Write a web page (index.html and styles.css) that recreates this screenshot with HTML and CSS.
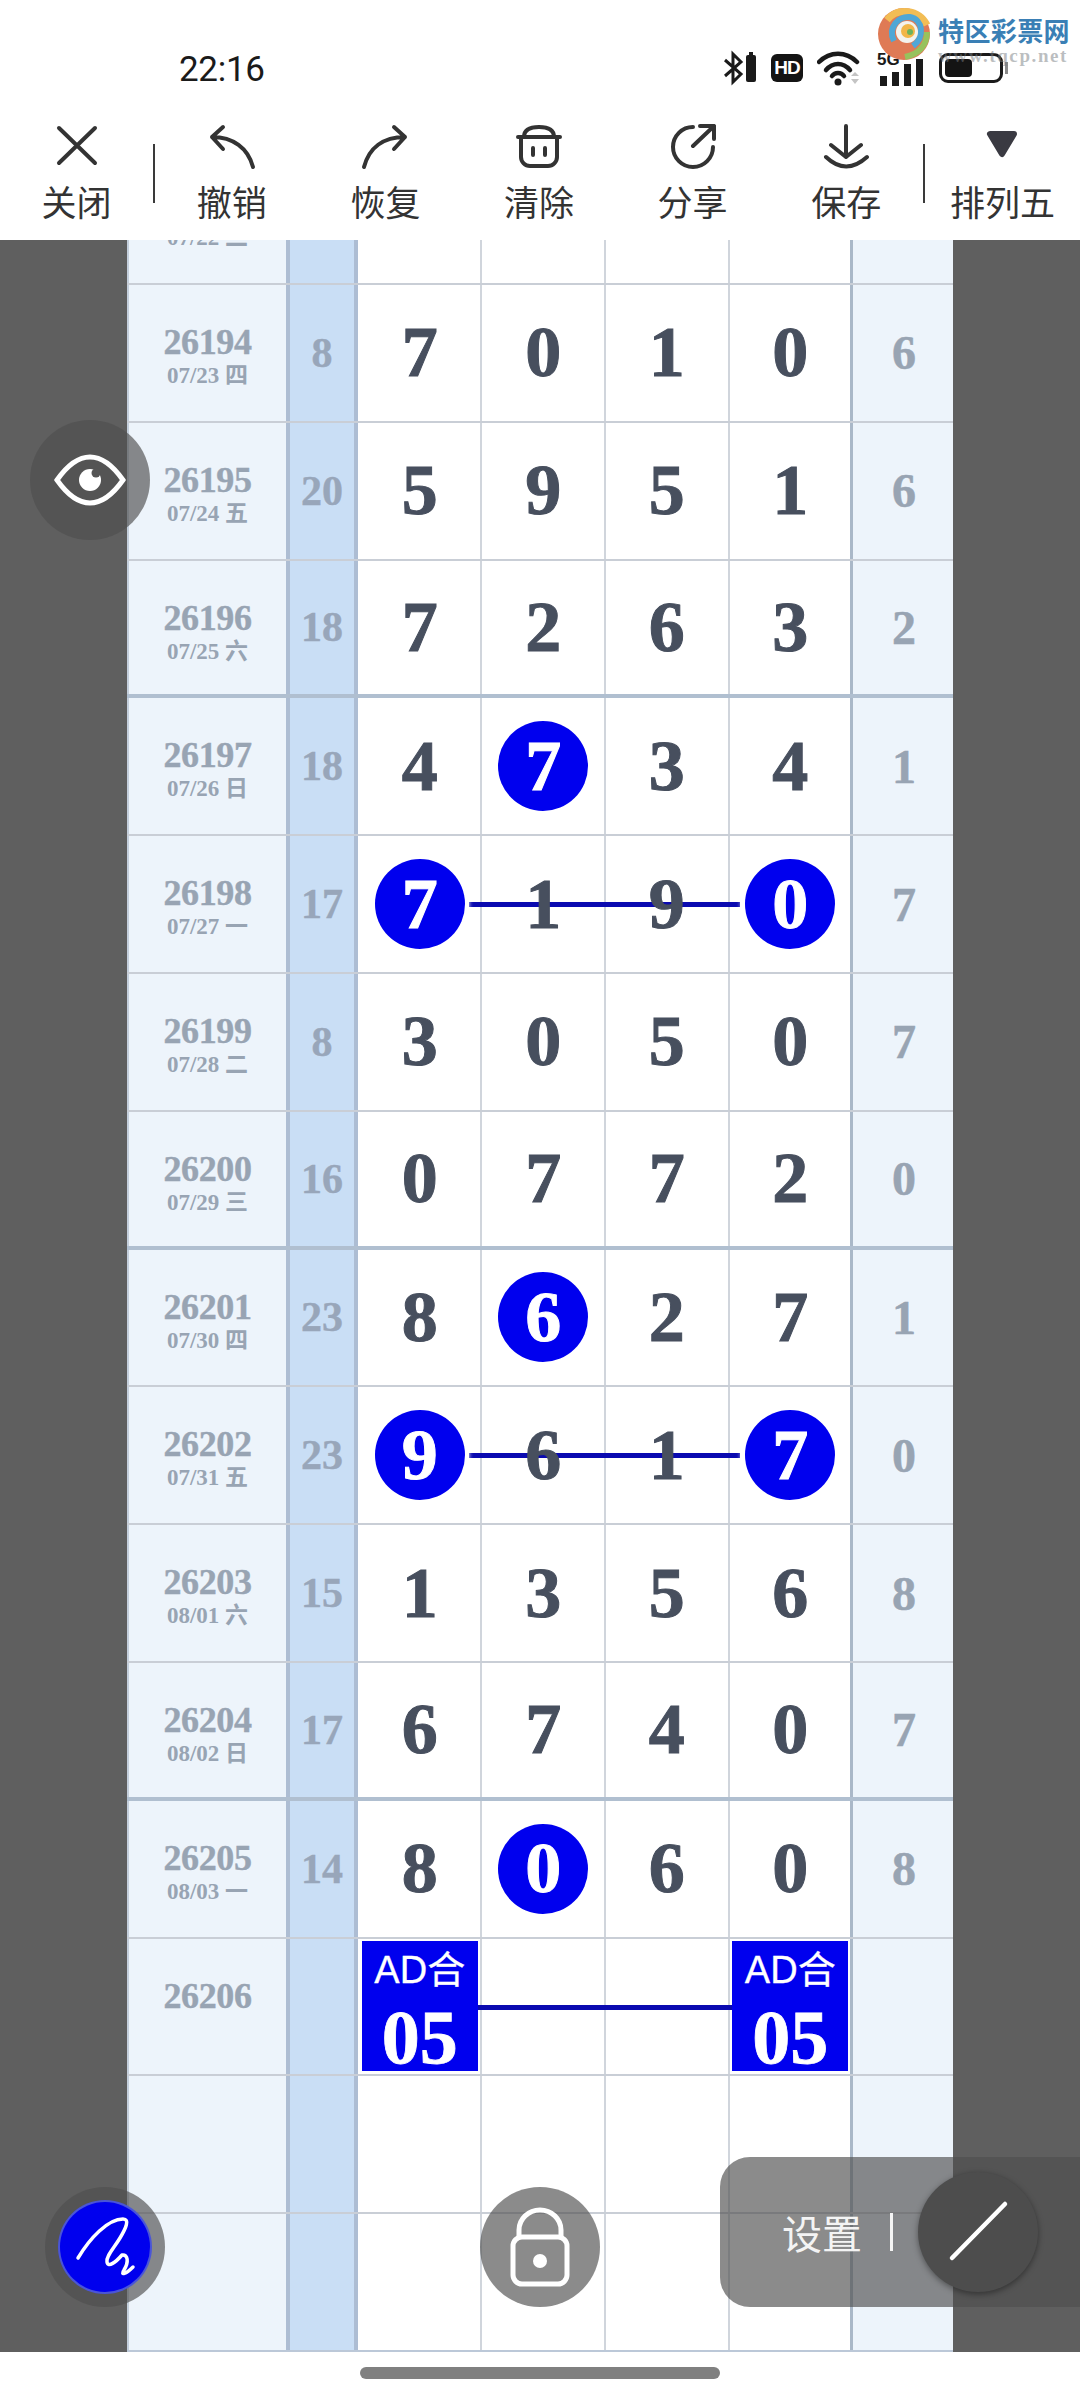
FILE: index.html
```html
<!DOCTYPE html>
<html lang="zh">
<head>
  <meta charset="UTF-8" />
  <meta name="viewport" content="width=device-width, initial-scale=1.0"/>
  <title>排列五 走势图</title>
  <link rel="stylesheet" href="styles.css">
</head>
<body>

  <!-- STATUS BAR + TOOLBAR -->
  <div class="top-area">
    <div class="status-bar">
      <span class="time">22:16</span>
      <div class="status-icons">
        <svg width="35" height="36" viewBox="0 0 35 36">
          <path d="M3 10 L19 24 L11 32 V4 L19 12 L3 26" fill="none" stroke="#1a1a1a" stroke-width="3"/>
          <rect x="24" y="5" width="10" height="27" rx="2" fill="#1a1a1a"/>
          <rect x="27" y="2" width="4" height="4" fill="#1a1a1a"/>
        </svg>
        <div class="hd-badge">HD</div>
        <svg width="46" height="36" viewBox="0 0 46 36">
          <path d="M2 12 C13 1 29 1 40 12" fill="none" stroke="#1a1a1a" stroke-width="4.5" stroke-linecap="round"/>
          <path d="M9 20 C16 12 26 12 33 20" fill="none" stroke="#1a1a1a" stroke-width="4.5" stroke-linecap="round"/>
          <path d="M15 26 C18 22 24 22 27 26" fill="none" stroke="#1a1a1a" stroke-width="4.5" stroke-linecap="round"/>
          <circle cx="21" cy="32" r="3.5" fill="#1a1a1a"/>
          <path d="M38 22 L42 26 H34 Z M38 34 L42 29 H34 Z" fill="#c4c4c4"/>
        </svg>
        <div class="signal">
          <span class="five-g">5G</span>
          <i class="bar bar-1"></i><i class="bar bar-2"></i><i class="bar bar-3"></i><i class="bar bar-4"></i>
        </div>
        <div class="battery"><div class="battery-fill"></div></div>
      </div>
    </div>

    <div class="toolbar">
      <div class="tool">
        <svg class="tool-icon" viewBox="0 0 48 48"><path d="M6 4 L42 39 M42 4 L6 39"/></svg>
        <span>关闭</span>
      </div>
      <div class="tool-sep"></div>
      <div class="tool">
        <svg class="tool-icon" viewBox="0 0 48 48"><path d="M15 3 L4 13 L15 25 M4 13 C25 13 40 24 45 43"/></svg>
        <span>撤销</span>
      </div>
      <div class="tool">
        <svg class="tool-icon" viewBox="0 0 48 48"><path d="M33 3 L44 13 L33 25 M44 13 C22 13 8 24 3 43"/></svg>
        <span>恢复</span>
      </div>
      <div class="tool">
        <svg class="tool-icon" viewBox="0 0 48 48"><path d="M3 13 H45 M9 13 C9 6 15 3 24 3 C33 3 39 6 39 13 M6 13 V33 a9 9 0 0 0 9 9 H33 a9 9 0 0 0 9 -9 V13 M18 24 V31 M30 24 V31"/></svg>
        <span>清除</span>
      </div>
      <div class="tool">
        <svg class="tool-icon" viewBox="0 0 48 48"><path d="M24 3 A20 20 0 1 0 44 23 M24 22 L45 2 M31 2 H45 V15"/></svg>
        <span>分享</span>
      </div>
      <div class="tool">
        <svg class="tool-icon" viewBox="0 0 48 48"><path d="M24 2 V33 M9 21 L24 33 L39 21 M4 33 Q24 52 45 33"/></svg>
        <span>保存</span>
      </div>
      <div class="tool-sep"></div>
      <div class="tool tool-last">
        <svg class="tool-icon" viewBox="0 0 48 48"><path class="solid" d="M12 10 H36 L24 30 Z"/></svg>
        <span>排列五</span>
      </div>
    </div>
  </div>

  <!-- CHART -->
  <div class="stage">
    <div class="sheet">

      <div class="row">
        <div class="cell info"><div class="issue"></div><div class="date">07/22 二</div></div>
        <div class="cell sum"></div>
        <div class="cell num"></div><div class="cell num"></div><div class="cell num"></div><div class="cell num"></div>
        <div class="cell tail"></div>
      </div>

      <div class="row">
        <div class="cell info"><div class="issue">26194</div><div class="date">07/23 四</div></div>
        <div class="cell sum">8</div>
        <div class="cell num">7</div><div class="cell num">0</div><div class="cell num">1</div><div class="cell num">0</div>
        <div class="cell tail">6</div>
      </div>

      <div class="row">
        <div class="cell info"><div class="issue">26195</div><div class="date">07/24 五</div></div>
        <div class="cell sum">20</div>
        <div class="cell num">5</div><div class="cell num">9</div><div class="cell num">5</div><div class="cell num">1</div>
        <div class="cell tail">6</div>
      </div>

      <div class="row row-thick">
        <div class="cell info"><div class="issue">26196</div><div class="date">07/25 六</div></div>
        <div class="cell sum">18</div>
        <div class="cell num">7</div><div class="cell num">2</div><div class="cell num">6</div><div class="cell num">3</div>
        <div class="cell tail">2</div>
      </div>

      <div class="row">
        <div class="cell info"><div class="issue">26197</div><div class="date">07/26 日</div></div>
        <div class="cell sum">18</div>
        <div class="cell num">4</div><div class="cell num"><span class="ball">7</span></div><div class="cell num">3</div><div class="cell num">4</div>
        <div class="cell tail">1</div>
      </div>

      <div class="row">
        <div class="link-line"></div>
        <div class="cell info"><div class="issue">26198</div><div class="date">07/27 一</div></div>
        <div class="cell sum">17</div>
        <div class="cell num"><span class="ball">7</span></div><div class="cell num">1</div><div class="cell num">9</div><div class="cell num"><span class="ball">0</span></div>
        <div class="cell tail">7</div>
      </div>

      <div class="row">
        <div class="cell info"><div class="issue">26199</div><div class="date">07/28 二</div></div>
        <div class="cell sum">8</div>
        <div class="cell num">3</div><div class="cell num">0</div><div class="cell num">5</div><div class="cell num">0</div>
        <div class="cell tail">7</div>
      </div>

      <div class="row row-thick">
        <div class="cell info"><div class="issue">26200</div><div class="date">07/29 三</div></div>
        <div class="cell sum">16</div>
        <div class="cell num">0</div><div class="cell num">7</div><div class="cell num">7</div><div class="cell num">2</div>
        <div class="cell tail">0</div>
      </div>

      <div class="row">
        <div class="cell info"><div class="issue">26201</div><div class="date">07/30 四</div></div>
        <div class="cell sum">23</div>
        <div class="cell num">8</div><div class="cell num"><span class="ball">6</span></div><div class="cell num">2</div><div class="cell num">7</div>
        <div class="cell tail">1</div>
      </div>

      <div class="row">
        <div class="link-line"></div>
        <div class="cell info"><div class="issue">26202</div><div class="date">07/31 五</div></div>
        <div class="cell sum">23</div>
        <div class="cell num"><span class="ball">9</span></div><div class="cell num">6</div><div class="cell num">1</div><div class="cell num"><span class="ball">7</span></div>
        <div class="cell tail">0</div>
      </div>

      <div class="row">
        <div class="cell info"><div class="issue">26203</div><div class="date">08/01 六</div></div>
        <div class="cell sum">15</div>
        <div class="cell num">1</div><div class="cell num">3</div><div class="cell num">5</div><div class="cell num">6</div>
        <div class="cell tail">8</div>
      </div>

      <div class="row row-thick">
        <div class="cell info"><div class="issue">26204</div><div class="date">08/02 日</div></div>
        <div class="cell sum">17</div>
        <div class="cell num">6</div><div class="cell num">7</div><div class="cell num">4</div><div class="cell num">0</div>
        <div class="cell tail">7</div>
      </div>

      <div class="row">
        <div class="cell info"><div class="issue">26205</div><div class="date">08/03 一</div></div>
        <div class="cell sum">14</div>
        <div class="cell num">8</div><div class="cell num"><span class="ball">0</span></div><div class="cell num">6</div><div class="cell num">0</div>
        <div class="cell tail">8</div>
      </div>

      <div class="row">
        <div class="link-line link-wide"></div>
        <div class="cell info"><div class="issue">26206</div></div>
        <div class="cell sum"></div>
        <div class="cell num"><div class="ad-box"><span class="ad-label">AD合</span><span class="ad-value">05</span></div></div>
        <div class="cell num"></div><div class="cell num"></div>
        <div class="cell num"><div class="ad-box"><span class="ad-label">AD合</span><span class="ad-value">05</span></div></div>
        <div class="cell tail"></div>
      </div>

      <div class="row">
        <div class="cell info"></div><div class="cell sum"></div>
        <div class="cell num"></div><div class="cell num"></div><div class="cell num"></div><div class="cell num"></div>
        <div class="cell tail"></div>
      </div>

      <div class="row row-last">
        <div class="cell info"></div><div class="cell sum"></div>
        <div class="cell num"></div><div class="cell num"></div><div class="cell num"></div><div class="cell num"></div>
        <div class="cell tail"></div>
      </div>

    </div>
  </div>

  <!-- HOME INDICATOR -->
  <div class="bottom-area"><div class="home-bar"></div></div>

  <!-- WATERMARK -->
  <div class="watermark">
    <svg class="wm-logo" width="54" height="54" viewBox="0 0 54 54">
      <ellipse cx="27" cy="27" rx="26" ry="26" fill="#df7a55"/>
      <path d="M10 13 C20 0 42 2 50 18" fill="none" stroke="#f2bd55" stroke-width="7"/>
      <path d="M50 25 C50 38 42 47 28 50" fill="none" stroke="#97c25c" stroke-width="6"/>
      <path d="M17 34 C10 20 22 9 33 10 C46 12 48 30 36 39" fill="none" stroke="#4fa7d6" stroke-width="6"/>
      <circle cx="30" cy="25" r="11" fill="#f3f3ee"/>
      <circle cx="31" cy="24" r="7" fill="#f2b648"/>
      <circle cx="33" cy="25" r="3" fill="#6db35c"/>
    </svg>
    <div class="wm-text">
      <div class="wm-name">特区彩票网</div>
      <div class="wm-url">www.tqcp.net</div>
    </div>
  </div>

  <!-- FLOATING BUTTONS -->
  <div class="float-btn eye-btn">
    <svg width="72" height="52" viewBox="0 0 72 52">
      <path d="M3 26 C15 9 25 3 36 3 C47 3 57 9 69 26 C57 43 47 49 36 49 C25 49 15 43 3 26 Z" fill="none" stroke="#fff" stroke-width="5"/>
      <circle cx="36" cy="26" r="11" fill="#fff"/>
      <circle cx="42" cy="19" r="4.5" fill="#555"/>
    </svg>
  </div>

  <div class="float-btn pen-btn">
    <div class="pen-inner">
      <svg width="90" height="90" viewBox="0 0 90 90">
        <path d="M18 56 C30 36 48 17 63 17 C70 17 66 26 60 36 C54 46 46 54 47 60 C48 66 56 60 62 53 C68 52 69 60 64 68 C60 74 66 72 73 65" fill="none" stroke="#fff" stroke-width="3.5" stroke-linecap="round"/>
      </svg>
    </div>
  </div>

  <div class="float-btn lock-btn">
    <svg width="62" height="82" viewBox="0 0 62 82">
      <path d="M10 31 V24 a21 20 0 0 1 42 0 V31" fill="none" stroke="#fff" stroke-width="5"/>
      <rect x="4" y="31" width="54" height="47" rx="9" fill="none" stroke="#fff" stroke-width="5"/>
      <circle cx="31" cy="55" r="7" fill="#fff"/>
    </svg>
  </div>

  <div class="settings-panel">
    <span class="settings-text">设置</span>
    <div class="settings-sep"></div>
    <div class="slash-btn">
      <svg width="120" height="120" viewBox="0 0 120 120">
        <path d="M87 32 L34 86" fill="none" stroke="#fff" stroke-width="4.5" stroke-linecap="round"/>
      </svg>
    </div>
  </div>

</body>
</html>
```

FILE: styles.css
```css
* {
  margin: 0;
  padding: 0;
  box-sizing: border-box;
}

html, body {
  width: 1080px;
  height: 2400px;
  overflow: hidden;
  background: #fff;
}

body {
  position: relative;
  font-family: "Noto Sans CJK SC", "Noto Sans", sans-serif;
  color: #333;
}

/* Status bar */
.top-area {
  height: 240px;
  background: #fff;
}

.status-bar {
  height: 110px;
  padding: 28px 72px 0 179px;
  display: flex;
  align-items: center;
  justify-content: space-between;
}

.time {
  font-family: Roboto, sans-serif;
  font-size: 35px;
  color: #1a1a1a;
  letter-spacing: -0.3px;
}

.status-icons {
  display: flex;
  align-items: center;
  gap: 14px;
  margin-top: -2px;
}

.hd-badge {
  width: 32px;
  height: 28px;
  border-radius: 6px;
  background: #141414;
  color: #fff;
  font-family: "Liberation Sans", sans-serif;
  font-size: 19px;
  font-weight: bold;
  line-height: 28px;
  text-align: center;
  letter-spacing: -1px;
}

.signal {
  position: relative;
  width: 48px;
  height: 36px;
  display: flex;
  align-items: flex-end;
  gap: 5px;
  padding-left: 3px;
}

.five-g {
  position: absolute;
  top: 2px;
  left: 0;
  font-family: "Liberation Sans", sans-serif;
  font-size: 17px;
  font-weight: bold;
  line-height: 16px;
  color: #1a1a1a;
}

.bar {
  display: block;
  width: 7px;
  background: #1a1a1a;
}

.bar-1 { height: 10px; }
.bar-2 { height: 14px; }
.bar-3 { height: 22px; }
.bar-4 { height: 27px; }

.battery {
  position: relative;
  width: 64px;
  height: 30px;
  margin-right: 5px;
  padding: 3px;
  border: 3px solid #1a1a1a;
  border-radius: 9px;
}

.battery::after {
  content: "";
  position: absolute;
  top: 6px;
  right: -8px;
  width: 3px;
  height: 12px;
  background: #8a8a8a;
}

.battery-fill {
  width: 27px;
  height: 18px;
  background: #141414;
  border-radius: 4px;
}

/* Toolbar */
.toolbar {
  height: 130px;
  padding-top: 14px;
  display: flex;
}

.tool {
  width: 153.6px;
  display: flex;
  flex-direction: column;
  align-items: center;
  font-size: 35px;
  line-height: 40px;
  color: #333;
}

.tool:first-child {
  width: 153px;
}

.tool-last {
  width: 155px;
}

.tool-last span {
  white-space: nowrap;
}

.tool-icon {
  width: 48px;
  height: 48px;
  margin-bottom: 9px;
  fill: none;
  stroke: #333;
  stroke-width: 4;
  stroke-linecap: round;
  stroke-linejoin: round;
}

.tool-icon .solid {
  fill: #3a3a42;
  stroke: #3a3a42;
  stroke-width: 6;
}

.tool-sep {
  width: 2px;
  height: 59px;
  margin-top: 20px;
  background: #3a3a3a;
}

/* Chart */
.stage {
  position: relative;
  z-index: 0;
  height: 2112px;
  background: #5f5f5f;
  overflow: hidden;
}

.sheet {
  width: 826px;
  margin-left: 127px;
  margin-top: -92.8px;
}

/* the thin column rules sit on the row so the link lines can cross them */
.row {
  position: relative;
  height: 137.8px;
  display: grid;
  grid-template-columns: 159px 72px repeat(4, 123.5px) 101px;
  background:
    linear-gradient(#d0d5dc, #d0d5dc) 353px 0 / 2px 100% no-repeat,
    linear-gradient(#d0d5dc, #d0d5dc) 477px 0 / 2px 100% no-repeat,
    linear-gradient(#d0d5dc, #d0d5dc) 601px 0 / 2px 100% no-repeat,
    #fff;
  border-bottom: 2px solid #c9ced6;
}

.row-thick {
  border-bottom: 4px solid #b0bfd0;
}

.row-last {
  border-bottom: 2px solid #bcc8d8;
}

.cell {
  position: relative;
  z-index: 1;
  font-family: "Liberation Serif", "Noto Sans CJK SC", serif;
  font-weight: bold;
}

.info {
  background: #edf4fb;
  color: #98a4b3;
  text-align: center;
  padding-top: 39px;
  border-left: 2px solid #c4cfdc;
}

.issue {
  height: 36px;
  font-size: 36px;
  line-height: 36px;
  letter-spacing: -0.4px;
  -webkit-text-stroke: 0.4px #98a4b3;
}

.date {
  font-size: 23px;
  line-height: 32px;
}

.sum {
  display: flex;
  align-items: center;
  justify-content: center;
  background: #c9def5;
  border-left: 4px solid #adbdd3;
  border-right: 4px solid #adbdd3;
  color: #98a6ba;
  font-size: 42px;
  -webkit-text-stroke: 0.4px #98a6ba;
}

.num {
  display: flex;
  align-items: center;
  justify-content: center;
  color: #474f5e;
  font-size: 72px;
  -webkit-text-stroke: 1px #474f5e;
}

.tail {
  display: flex;
  align-items: center;
  justify-content: center;
  margin-left: -2px;
  padding-left: 2px;
  background: #edf4fb;
  border-left: 3px solid #aab8c8;
  color: #98a4b3;
  font-size: 48px;
  -webkit-text-stroke: 0.5px #98a4b3;
}

.ball {
  width: 90px;
  height: 90px;
  border-radius: 50%;
  background: #0000ee;
  color: #fff;
  -webkit-text-stroke: 1px #fff;
  display: flex;
  align-items: center;
  justify-content: center;
  box-shadow: 0 0 4px 4px #fff;
}

.link-line {
  position: absolute;
  z-index: 0;
  left: 342px;
  top: 66px;
  width: 271px;
  height: 5px;
  background: #0a0ab0;
}

.link-wide {
  left: 349px;
  width: 256px;
}

.ad-box {
  width: 116px;
  height: 130px;
  background: #0000ee;
  color: #fff;
  -webkit-text-stroke: 0;
  display: flex;
  flex-direction: column;
  align-items: center;
}

.ad-label {
  font-family: "Liberation Sans", "Noto Sans CJK SC", sans-serif;
  font-weight: normal;
  font-size: 38px;
  line-height: 58px;
  white-space: nowrap;
  -webkit-text-stroke: 0.3px #fff;
}

.ad-value {
  font-size: 76px;
  line-height: 76px;
  -webkit-text-stroke: 0.8px #fff;
}

/* Home indicator */
.bottom-area {
  height: 48px;
  padding-top: 15px;
  display: flex;
  justify-content: center;
}

.home-bar {
  width: 360px;
  height: 12px;
  border-radius: 6px;
  background: #808080;
}

/* Watermark over the status bar */
.watermark {
  position: absolute;
  top: 7px;
  left: 877px;
  display: flex;
  gap: 7px;
}

.wm-text {
  padding-top: 7px;
}

.wm-name {
  font-size: 26px;
  font-weight: bold;
  line-height: 32px;
  color: #3a7fb5;
  white-space: nowrap;
  letter-spacing: 0.4px;
}

.wm-url {
  margin-top: 1px;
  font-family: "Liberation Serif", serif;
  font-size: 19px;
  font-weight: bold;
  line-height: 18px;
  color: rgba(120, 125, 130, 0.5);
  letter-spacing: 1.6px;
  white-space: nowrap;
}

/* Floating buttons */
.float-btn {
  position: absolute;
  z-index: 5;
  width: 120px;
  height: 120px;
  border-radius: 50%;
  background: rgba(79, 79, 79, 0.66);
  display: flex;
  align-items: center;
  justify-content: center;
}

.eye-btn {
  left: 30px;
  top: 420px;
}

.pen-btn {
  left: 45px;
  top: 2187px;
}

.pen-inner {
  width: 90px;
  height: 90px;
  border-radius: 50%;
  background: #0000ee;
  box-shadow: 0 0 0 2px #4a55d8;
}

.lock-btn {
  left: 480px;
  top: 2187px;
}

.settings-panel {
  position: absolute;
  z-index: 5;
  left: 720px;
  top: 2157px;
  width: 360px;
  height: 150px;
  padding-left: 62px;
  border-radius: 30px 0 0 30px;
  background: rgba(79, 79, 79, 0.66);
  display: flex;
  align-items: center;
}

.settings-text {
  font-size: 40px;
  line-height: 48px;
  color: #f4f4f4;
  margin-right: 28px;
}

.settings-sep {
  width: 3px;
  height: 38px;
  margin-right: 25px;
  background: #f4f4f4;
}

.slash-btn {
  width: 120px;
  height: 120px;
  border-radius: 50%;
  background: #4d4d4d;
  box-shadow: 0 2px 6px rgba(0, 0, 0, 0.4);
}
```
